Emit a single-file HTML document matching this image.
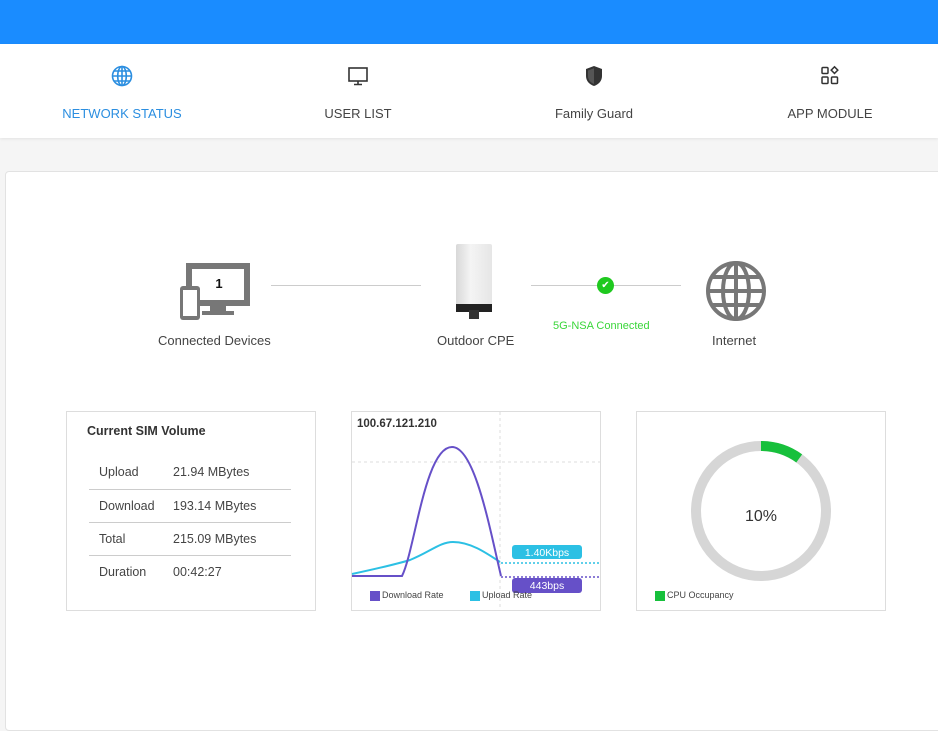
<!DOCTYPE html>
<html><head><meta charset="utf-8"><style>
*{margin:0;padding:0;box-sizing:border-box}
body{width:938px;height:706px;overflow:hidden;background:#f5f5f5;font-family:"Liberation Sans","DejaVu Sans",sans-serif;position:relative;color:#333}
.top{position:absolute;left:0;top:0;width:938px;height:44px;background:#1a8cff}
.nav{position:absolute;left:0;top:44px;width:938px;height:94px;background:#fff;box-shadow:0 1px 3px rgba(0,0,0,.08)}
.tab{position:absolute;top:0;width:200px;text-align:center}
.tab svg{position:absolute;left:88px;top:20px}
.tab span{position:absolute;top:62px;left:0;width:200px;font-size:13px;color:#444}
.panel{position:absolute;left:5px;top:171px;width:940px;height:560px;background:#fff;border:1px solid #e2e2e2;border-radius:4px}
.lbl{position:absolute;font-size:13px;color:#444}
.box{position:absolute;border:1px solid #ddd;background:#fff}
table{border-collapse:collapse}
td{font-size:12.5px;color:#444;height:33px;border-bottom:1px solid #ccc}
tr:last-child td{border-bottom:none}
</style></head><body>
<div class="top"></div>
<div class="nav">
 <div class="tab" style="left:22px"><svg width="24" height="24" viewBox="0 0 24 24" fill="none" stroke="#2b8ee0" stroke-width="1.6"><circle cx="12" cy="12" r="9.5"/><ellipse cx="12" cy="12" rx="4.3" ry="9.5"/><line x1="2.5" y1="12" x2="21.5" y2="12"/><line x1="12" y1="2.5" x2="12" y2="21.5"/><path d="M4 7h16M4 17h16"/></svg><span style="color:#2b8ee0">NETWORK STATUS</span></div>
 <div class="tab" style="left:258px"><svg width="24" height="24" viewBox="0 0 24 24" fill="none" stroke="#333" stroke-width="1.6"><rect x="3" y="4" width="18" height="13"/><path d="M12 17v3M8 20.5h8"/></svg><span>USER LIST</span></div>
 <div class="tab" style="left:494px"><svg width="24" height="24" viewBox="0 0 24 24"><path d="M12 2L4 5v7c0 5 3.5 8.5 8 10 4.5-1.5 8-5 8-10V5z" fill="#333"/><path d="M12 4.2L6 6.5v5.5c0 4 2.7 6.8 6 8z" fill="#555"/></svg><span>Family Guard</span></div>
 <div class="tab" style="left:730px"><svg width="24" height="24" viewBox="0 0 24 24" fill="none" stroke="#333" stroke-width="1.5"><rect x="4" y="3.5" width="6" height="6" rx="1"/><rect x="4" y="13" width="6" height="6.5" rx="1"/><rect x="13.5" y="13" width="6" height="6.5" rx="1"/><path d="M16.5 2.8l3.3 3.3-3.3 3.3-3.3-3.3z"/></svg><span>APP MODULE</span></div>
</div>
<div class="panel"></div>
<svg style="position:absolute;left:180px;top:262px" width="74" height="60" viewBox="0 0 74 60">
<rect x="6" y="1" width="64" height="43" fill="#777"/><rect x="12" y="7" width="52" height="31" fill="#fff"/>
<rect x="30" y="44" width="16" height="6" fill="#777"/><rect x="22" y="49" width="32" height="4" fill="#777"/>
<rect x="0" y="24" width="20" height="34" rx="3" fill="#777"/><rect x="3" y="28" width="14" height="26" fill="#fff"/>
<text x="39" y="26" font-size="13" font-weight="bold" fill="#111" text-anchor="middle" font-family="Liberation Sans">1</text></svg>
<div style="position:absolute;left:271px;top:285px;width:150px;height:1px;background:#ccc"></div>
<div style="position:absolute;left:531px;top:285px;width:150px;height:1px;background:#ccc"></div>
<div style="position:absolute;left:456px;top:244px;width:36px;height:66px;background:linear-gradient(90deg,#d8d8d8,#f4f4f4 40%,#e6e6e6);border-radius:2px"></div>
<div style="position:absolute;left:456px;top:304px;width:36px;height:8px;background:#222"></div>
<div style="position:absolute;left:469px;top:310px;width:10px;height:9px;background:#333"></div>
<div style="position:absolute;left:597px;top:277px;width:17px;height:17px;border-radius:50%;background:#1fc91f;color:#fff;font-size:10px;text-align:center;line-height:17px">✔</div>
<div style="position:absolute;left:553px;top:320px;font-size:11px;color:#3ad63a">5G-NSA Connected</div>
<svg style="position:absolute;left:705px;top:260px" width="62" height="62" viewBox="0 0 62 62" fill="none" stroke="#777" stroke-width="4"><circle cx="31" cy="31" r="28"/><ellipse cx="31" cy="31" rx="13" ry="28"/><line x1="3" y1="31" x2="59" y2="31"/><line x1="31" y1="3" x2="31" y2="59"/><path d="M8 17h46M8 45h46"/></svg>
<div class="lbl" style="left:158px;top:333px">Connected Devices</div>
<div class="lbl" style="left:437px;top:333px">Outdoor CPE</div>
<div class="lbl" style="left:712px;top:333px">Internet</div>
<div class="box" style="left:66px;top:411px;width:250px;height:200px">
<div style="position:absolute;left:20px;top:12px;font-size:12.5px;font-weight:bold;color:#333">Current SIM Volume</div>
<table style="position:absolute;left:22px;top:44px;width:202px">
<tr><td style="padding-left:10px;width:84px">Upload</td><td>21.94 MBytes</td></tr>
<tr><td style="padding-left:10px">Download</td><td>193.14 MBytes</td></tr>
<tr><td style="padding-left:10px">Total</td><td>215.09 MBytes</td></tr>
<tr><td style="padding-left:10px">Duration</td><td>00:42:27</td></tr>
</table></div>
<div class="box" style="left:351px;top:411px;width:250px;height:200px"></div>
<div class="box" style="left:636px;top:411px;width:250px;height:200px"></div>
<svg style="position:absolute;left:0;top:0" width="938" height="706">
<line x1="352" y1="462" x2="600" y2="462" stroke="#ddd" stroke-dasharray="3,3"/>
<line x1="500" y1="412" x2="500" y2="610" stroke="#ddd" stroke-dasharray="3,3"/>
<path d="M352 574 C380 568 400 563 410 560 C430 552 440 542 453 542 C470 542 485 552 500 562" fill="none" stroke="#2cc0e4" stroke-width="2"/>
<path d="M352 576 L402 576 C415 550 425 447 452 447 C475 447 490 530 501 576" fill="none" stroke="#6650c8" stroke-width="2"/>
<line x1="501" y1="563" x2="600" y2="563" stroke="#2cc0e4" stroke-width="1.5" stroke-dasharray="2,2"/>
<line x1="501" y1="577" x2="600" y2="577" stroke="#6650c8" stroke-width="1.5" stroke-dasharray="2,2"/>
<rect x="512" y="545" width="70" height="14" rx="3" fill="#2cc0e4"/>
<text x="547" y="556" font-size="10.5" fill="#fff" text-anchor="middle" font-family="Liberation Sans">1.40Kbps</text>
<rect x="512" y="578" width="70" height="15" rx="3" fill="#6650c8"/>
<text x="547" y="589" font-size="10.5" fill="#fff" text-anchor="middle" font-family="Liberation Sans">443bps</text>
<circle cx="761" cy="511" r="65" fill="none" stroke="#d6d6d6" stroke-width="10"/>
<path d="M761 446 A65 65 0 0 1 799.2 458.4" fill="none" stroke="#17c03c" stroke-width="10"/>
<text x="761" y="521" font-size="16" fill="#333" text-anchor="middle" font-family="Liberation Sans">10%</text>
</svg>
<div style="position:absolute;left:357px;top:418px;font-size:11.5px;font-weight:bold;color:#333">100.67.121.210</div>
<div style="position:absolute;left:370px;top:591px;width:10px;height:10px;background:#6650c8"></div>
<div style="position:absolute;left:382px;top:590px;font-size:9px;color:#444">Download Rate</div>
<div style="position:absolute;left:470px;top:591px;width:10px;height:10px;background:#2cc0e4"></div>
<div style="position:absolute;left:482px;top:590px;font-size:9px;color:#444">Upload Rate</div>
<div style="position:absolute;left:655px;top:591px;width:10px;height:10px;background:#17c03c"></div>
<div style="position:absolute;left:667px;top:590px;font-size:9px;color:#444">CPU Occupancy</div>
</body></html>
